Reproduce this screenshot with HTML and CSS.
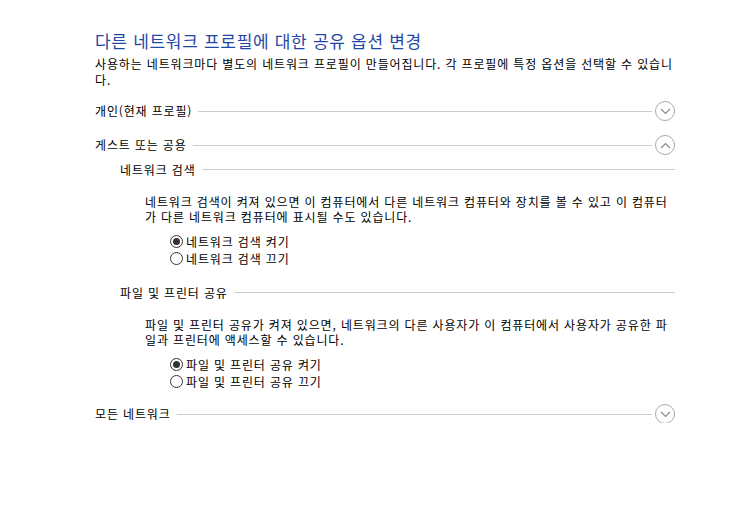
FILE: index.html
```html
<!DOCTYPE html>
<html lang="ko">
<head>
    <meta charset="UTF-8">
    <title>고급 공유 설정</title>
    <link rel="stylesheet" href="styles.css">
</head>
<body>
    <div class="page">
        <h1 class="title">다른 네트워크 프로필에 대한 공유 옵션 변경</h1>
        <p class="intro">사용하는 네트워크마다 별도의 네트워크 프로필이 만들어집니다. 각 프로필에 특정 옵션을 선택할 수 있습니다.</p>

        <!-- 개인 -->
        <div class="group">
            <div class="group-head">
                <span class="group-name">개인(현재 프로필)</span>
                <span class="rule"></span>
                <button class="toggle" type="button">
                    <svg width="11" height="7" viewBox="0 0 11 7"><path d="M1 1 L5.5 5.5 L10 1" /></svg>
                </button>
            </div>
        </div>

        <!-- 게스트 또는 공용 -->
        <div class="group open">
            <div class="group-head">
                <span class="group-name">게스트 또는 공용</span>
                <span class="rule"></span>
                <button class="toggle" type="button">
                    <svg width="11" height="7" viewBox="0 0 11 7"><path d="M1 6 L5.5 1.5 L10 6" /></svg>
                </button>
            </div>

            <div class="option">
                <div class="option-head">
                    <span>네트워크 검색</span>
                    <span class="rule"></span>
                </div>
                <p class="option-text">네트워크 검색이 켜져 있으면 이 컴퓨터에서 다른 네트워크 컴퓨터와 장치를 볼 수 있고 이 컴퓨터가 다른 네트워크 컴퓨터에 표시될 수도 있습니다.</p>
                <div class="choices">
                    <label class="choice"><input type="radio" name="discovery" checked>네트워크 검색 켜기</label>
                    <label class="choice"><input type="radio" name="discovery">네트워크 검색 끄기</label>
                </div>
            </div>

            <div class="option">
                <div class="option-head">
                    <span>파일 및 프린터 공유</span>
                    <span class="rule"></span>
                </div>
                <p class="option-text">파일 및 프린터 공유가 켜져 있으면, 네트워크의 다른 사용자가 이 컴퓨터에서 사용자가 공유한 파일과 프린터에 액세스할 수 있습니다.</p>
                <div class="choices">
                    <label class="choice"><input type="radio" name="sharing" checked>파일 및 프린터 공유 켜기</label>
                    <label class="choice"><input type="radio" name="sharing">파일 및 프린터 공유 끄기</label>
                </div>
            </div>
        </div>

        <!-- 모든 네트워크 -->
        <div class="group">
            <div class="group-head">
                <span class="group-name">모든 네트워크</span>
                <span class="rule"></span>
                <button class="toggle" type="button">
                    <svg width="11" height="7" viewBox="0 0 11 7"><path d="M1 1 L5.5 5.5 L10 1" /></svg>
                </button>
            </div>
        </div>
    </div>
</body>
</html>
```

FILE: styles.css
```css
body {
    margin: 0;
    background: #fff;
    color: #000;
    font-family: "Noto Sans CJK KR", "Noto Sans", sans-serif;
    font-size: 12px;
    letter-spacing: 0.85px;
}

.page {
    width: 580px;
    padding: 29px 0 0 95px;
}

.title {
    margin: 0;
    font-size: 17px;
    font-weight: normal;
    line-height: 24px;
    letter-spacing: 0.7px;
    color: #1f48a4;
}

.intro {
    margin: 3px 0 0;
    line-height: 16px;
}

.group-head,
.option-head {
    display: flex;
    align-items: center;
}

.group-head {
    height: 20px;
}

.group {
    margin-top: 12px;
}

.group.open {
    margin-top: 14px;
}

.group.open + .group {
    margin-top: 13px;
}

.rule {
    flex: 1;
    height: 1px;
    background: #cdcdcd;
    margin-left: 6px;
}

.group-head .rule {
    margin-right: 3px;
    margin-top: 2px;
}

.option-head .rule {
    margin-top: 1px;
}

.toggle {
    width: 20px;
    height: 20px;
    padding: 0;
    border: 1px solid #a8a8a8;
    border-radius: 50%;
    background: #fff;
    display: flex;
    align-items: center;
    justify-content: center;
    margin-top: 2px;
}

.toggle svg {
    fill: none;
    stroke: #8a8a8a;
    stroke-width: 1.2;
}

.option {
    margin-left: 25px;
}

.group-head + .option {
    margin-top: 7px;
}

.option + .option {
    margin-top: 17px;
}

.option-head {
    height: 16px;
}

.option-text {
    margin: 17px 0 0 25px;
    line-height: 15px;
}

.choices {
    margin: 9px 0 0 50px;
    display: flex;
    flex-direction: column;
}

.choice {
    display: flex;
    align-items: center;
    height: 17px;
}

.choice input {
    appearance: none;
    -webkit-appearance: none;
    width: 13px;
    height: 13px;
    margin: 0 3px 0 0;
    border: 1px solid #333;
    border-radius: 50%;
    background: #fff;
    display: grid;
    place-content: center;
}

.choice input:checked::before {
    content: "";
    width: 7px;
    height: 7px;
    border-radius: 50%;
    background: #333;
}
```
